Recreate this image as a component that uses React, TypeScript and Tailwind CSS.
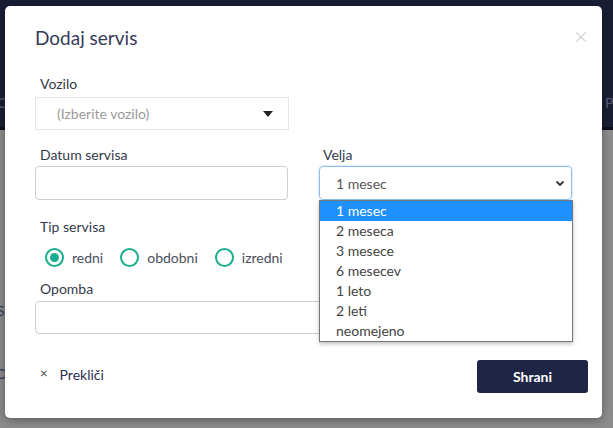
import { useState } from 'react';

const velja = ['1 mesec', '2 meseca', '3 mesece', '6 mesecev', '1 leto', '2 leti', 'neomejeno'];
const tipi = ['redni', 'obdobni', 'izredni'];

function Radio({ label, checked }: { label: string; checked: boolean }) {
  return (
    <label className="flex items-center gap-[8px] text-[14px] text-[#4a4e5e]">
      <span className="flex h-[19px] w-[19px] items-center justify-center rounded-full border-2 border-[#1aae8f]">
        {checked && <span className="h-[9px] w-[9px] rounded-full bg-[#1aae8f]" />}
      </span>
      {label}
    </label>
  );
}

export default function App() {
  const [tip] = useState('redni');

  return (
    <div className="relative h-[428px] w-[613px] overflow-hidden bg-[#8c8c8c] font-['Lato',sans-serif]">
      {/* stran v ozadju */}
      <div className="h-[130px] border-b-[3px] border-[#0d0f1a] bg-[#1a1e35]" />
      <span className="absolute left-[-3px] top-[92px] text-[14px] text-[#5b6075]">C</span>
      <span className="absolute left-[605px] top-[92px] text-[14px] text-[#5b6075]">P</span>
      <span className="absolute left-[-3px] top-[300px] text-[14px] text-[#2f3a55]">S</span>
      <span className="absolute left-[-4px] top-[363px] text-[14px] text-[#2f3a55]">O</span>

      {/* modal */}
      <div className="absolute left-[5px] top-[6px] flex h-[412px] w-[597px] flex-col rounded-[5px] bg-white shadow-[0_2px_10px_rgba(0,0,0,0.35)]">
        <div className="flex items-start justify-between px-[30px] pt-[18px]">
          <h2 className="text-[19px] leading-[28px] text-[#363b5a]">Dodaj servis</h2>
          <span className="mr-[-16px] mt-[0px] text-[24px] font-light leading-[24px] text-[#c8c8c8]">×</span>
        </div>

        <div className="px-[30px] pt-[22px]">
          <label className="block pl-[5px] text-[14px] leading-[20px] text-[#333a4d]">Vozilo</label>
          <div className="mt-[3px] flex h-[33px] w-[254px] items-center justify-between border border-[#e6e6e6] pl-[21px] pr-[15px] text-[14px] text-[#9a9a9a]">
            <span>(Izberite vozilo)</span>
            <span className="h-0 w-0 border-x-[5px] border-t-[6px] border-x-transparent border-t-[#222]" />
          </div>

          <div className="mt-[15px] grid grid-cols-2 gap-x-[31px]">
            <div>
              <label className="block pl-[5px] text-[14px] leading-[20px] text-[#333a4d]">Datum servisa</label>
              <div className="mt-[1px] h-[34px] rounded-[4px] border border-[#cfcfcf]" />
            </div>
            <div className="relative">
              <label className="block pl-[4px] text-[14px] leading-[20px] text-[#333a4d]">Velja</label>
              <div className="mt-[1px] flex h-[34px] items-center justify-between rounded-[4px] border border-[#8ec1f0] pl-[16px] pr-[6px] text-[14px] text-[#555] shadow-[0_0_0_1px_rgba(140,190,240,0.25)]">
                <span>1 mesec</span>
                <svg width="10" height="10" viewBox="0 0 10 10">
                  <path d="M1.5 3.5 L5 7 L8.5 3.5" fill="none" stroke="#333" strokeWidth="1.8" />
                </svg>
              </div>
              <ul className="absolute left-0 top-[55px] z-10 w-[254px] border border-[#767676] bg-white shadow-[0_2px_4px_rgba(0,0,0,0.25)]">
                {velja.map((v, i) => (
                  <li
                    key={v}
                    className={
                      i === 0
                        ? 'h-[20px] bg-[#1e90ff] pl-[16px] text-[14px] leading-[20px] text-white'
                        : 'h-[20px] pl-[16px] text-[14px] leading-[20px] text-[#444]'
                    }
                  >
                    {v}
                  </li>
                ))}
              </ul>
            </div>
          </div>

          <label className="mt-[17px] block pl-[5px] text-[14px] leading-[20px] text-[#333a4d]">Tip servisa</label>
          <div className="mt-[10px] flex gap-[17px] pl-[10px]">
            {tipi.map((t) => (
              <Radio key={t} label={t} checked={t === tip} />
            ))}
          </div>

          <label className="mt-[11px] block pl-[5px] text-[14px] leading-[20px] text-[#333a4d]">Opomba</label>
          <div className="mt-[2px] h-[33px] rounded-[4px] border border-[#cfcfcf]" />
        </div>

        <div className="mt-[26px] flex items-center justify-between pl-[35px] pr-[14px]">
          <button className="mb-[5px] flex items-center gap-[12px] text-[14px] text-[#2a2f4f]">
            <span className="text-[13px] text-[#444]">×</span>
            Prekliči
          </button>
          <button className="h-[33px] w-[111px] rounded-[3px] bg-[#1f2545] text-[14px] font-bold text-white">
            Shrani
          </button>
        </div>
      </div>
    </div>
  );
}
